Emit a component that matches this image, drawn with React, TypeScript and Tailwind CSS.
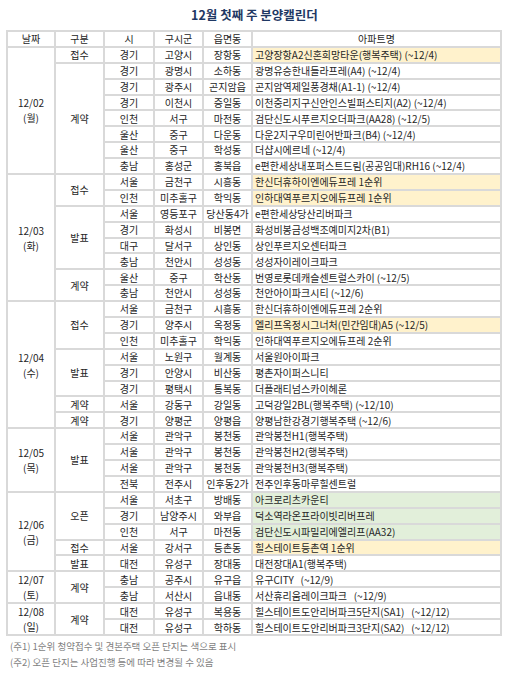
type Row = [string, string, string, string, ("y" | "g")?];
type Group = { kind: string; rows: Row[] };
type Day = { date: string; dow: string; groups: Group[] };

const days: Day[] = [
  {
    date: "12/02",
    dow: "(월)",
    groups: [
      { kind: "접수", rows: [["경기", "고양시", "장항동", "고양장항A2신혼희망타운(행복주택) (~12/4)", "y"]] },
      {
        kind: "계약",
        rows: [
          ["경기", "광명시", "소하동", "광명유승한내들라프레(A4) (~12/4)"],
          ["경기", "광주시", "곤지암읍", "곤지암역제일풍경채(A1-1) (~12/4)"],
          ["경기", "이천시", "증일동", "이천중리지구신안인스빌퍼스티지(A2) (~12/4)"],
          ["인천", "서구", "마전동", "검단신도시푸르지오더파크(AA28) (~12/5)"],
          ["울산", "중구", "다운동", "다운2지구우미린어반파크(B4) (~12/4)"],
          ["울산", "중구", "학성동", "더샵시에르네 (~12/4)"],
          ["충남", "홍성군", "홍북읍", "e편한세상내포퍼스트드림(공공임대)RH16 (~12/4)"],
        ],
      },
    ],
  },
  {
    date: "12/03",
    dow: "(화)",
    groups: [
      {
        kind: "접수",
        rows: [
          ["서울", "금천구", "시흥동", "한신더휴하이엔에듀프레 1순위", "y"],
          ["인천", "미추홀구", "학익동", "인하대역푸르지오에듀프레 1순위", "y"],
        ],
      },
      {
        kind: "발표",
        rows: [
          ["서울", "영등포구", "당산동4가", "e편한세상당산리버파크"],
          ["경기", "화성시", "비봉면", "화성비봉금성백조예미지2차(B1)"],
          ["대구", "달서구", "상인동", "상인푸르지오센터파크"],
          ["충남", "천안시", "성성동", "성성자이레이크파크"],
        ],
      },
      {
        kind: "계약",
        rows: [
          ["울산", "중구", "학산동", "번영로롯데캐슬센트럴스카이 (~12/5)"],
          ["충남", "천안시", "성성동", "천안아이파크시티 (~12/6)"],
        ],
      },
    ],
  },
  {
    date: "12/04",
    dow: "(수)",
    groups: [
      {
        kind: "접수",
        rows: [
          ["서울", "금천구", "시흥동", "한신더휴하이엔에듀프레 2순위"],
          ["경기", "양주시", "옥정동", "엘리프옥정시그너처(민간임대)A5 (~12/5)", "y"],
          ["인천", "미추홀구", "학익동", "인하대역푸르지오에듀프레 2순위"],
        ],
      },
      {
        kind: "발표",
        rows: [
          ["서울", "노원구", "월계동", "서울원아이파크"],
          ["경기", "안양시", "비산동", "평촌자이퍼스니티"],
          ["경기", "평택시", "통복동", "더플래티넘스카이헤론"],
        ],
      },
      { kind: "계약", rows: [["서울", "강동구", "강일동", "고덕강일2BL(행복주택) (~12/10)"]] },
      { kind: "계약", rows: [["경기", "양평군", "양평읍", "양평남한강경기행복주택 (~12/6)"]] },
    ],
  },
  {
    date: "12/05",
    dow: "(목)",
    groups: [
      {
        kind: "발표",
        rows: [
          ["서울", "관악구", "봉천동", "관악봉천H1(행복주택)"],
          ["서울", "관악구", "봉천동", "관악봉천H2(행복주택)"],
          ["서울", "관악구", "봉천동", "관악봉천H3(행복주택)"],
          ["전북", "전주시", "인후동2가", "전주인후동마루힐센트럴"],
        ],
      },
    ],
  },
  {
    date: "12/06",
    dow: "(금)",
    groups: [
      {
        kind: "오픈",
        rows: [
          ["서울", "서초구", "방배동", "아크로리츠카운티", "g"],
          ["경기", "남양주시", "와부읍", "덕소역라온프라이빗리버프레", "g"],
          ["인천", "서구", "마전동", "검단신도시파밀리에엘리프(AA32)", "g"],
        ],
      },
      { kind: "접수", rows: [["서울", "강서구", "등촌동", "힐스테이트등촌역 1순위", "y"]] },
      { kind: "발표", rows: [["대전", "유성구", "장대동", "대전장대A1(행복주택)"]] },
    ],
  },
  {
    date: "12/07",
    dow: "(토)",
    groups: [
      {
        kind: "계약",
        rows: [
          ["충남", "공주시", "유구읍", "유구CITY   (~12/9)"],
          ["충남", "서산시", "읍내동", "서산휴리움레이크파크   (~12/9)"],
        ],
      },
    ],
  },
  {
    date: "12/08",
    dow: "(일)",
    groups: [
      {
        kind: "계약",
        rows: [
          ["대전", "유성구", "복용동", "힐스테이트도안리버파크5단지(SA1)   (~12/12)"],
          ["대전", "유성구", "학하동", "힐스테이트도안리버파크3단지(SA2)   (~12/12)"],
        ],
      },
    ],
  },
];

const cell = "border-2 border-[#d9d9d9] p-0 text-center align-middle leading-[13.5px] whitespace-nowrap";

export default function App() {
  return (
    <div className="w-[509px] bg-white text-[#262626] font-['Noto_Sans_CJK_KR',sans-serif]">
      <div className="h-[30px] flex items-center justify-center text-[12.5px] font-bold text-[#1f3864]">
        12월 첫째 주 분양캘린더
      </div>
      <div className="pl-[6px]">
        <table className="w-[496px] table-fixed border-collapse text-[10px]">
          <colgroup>
            <col className="w-[48px]" />
            <col className="w-[49px]" />
            <col className="w-[50px]" />
            <col className="w-[49px]" />
            <col className="w-[49px]" />
            <col />
          </colgroup>
          <thead>
            <tr className="h-[15.9px]">
              {["날짜", "구분", "시", "구시군", "읍면동", "아파트명"].map((h) => (
                <th key={h} className={cell + " font-normal"}>
                  {h}
                </th>
              ))}
            </tr>
          </thead>
          <tbody>
            {days.map((day) => {
              const total = day.groups.reduce((n, g) => n + g.rows.length, 0);
              return day.groups.map((g, gi) =>
                g.rows.map((r, ri) => (
                  <tr key={day.date + gi + ri} className="h-[15.9px]">
                    {gi === 0 && ri === 0 && (
                      <td rowSpan={total} className={cell + " leading-[15px]"}>
                        {day.date}
                        <br />
                        {day.dow}
                      </td>
                    )}
                    {ri === 0 && (
                      <td rowSpan={g.rows.length} className={cell}>
                        {g.kind}
                      </td>
                    )}
                    <td className={cell}>{r[0]}</td>
                    <td className={cell}>{r[1]}</td>
                    <td className={cell}>{r[2]}</td>
                    <td
                      className={
                        cell +
                        " !text-left pl-[2px] whitespace-pre " +
                        (r[4] === "y" ? "bg-[#fff2cc]" : r[4] === "g" ? "bg-[#e2efda]" : "")
                      }
                    >
                      {r[3]}
                    </td>
                  </tr>
                ))
              );
            })}
          </tbody>
        </table>
      </div>
      <div className="pl-[10px] pt-[2px] text-[9.5px] leading-[16px] text-[#7f7f7f]">
        <div>(주1) 1순위 청약접수 및 견본주택 오픈 단지는 색으로 표시</div>
        <div>(주2) 오픈 단지는 사업진행 등에 따라 변경될 수 있음</div>
      </div>
    </div>
  );
}
